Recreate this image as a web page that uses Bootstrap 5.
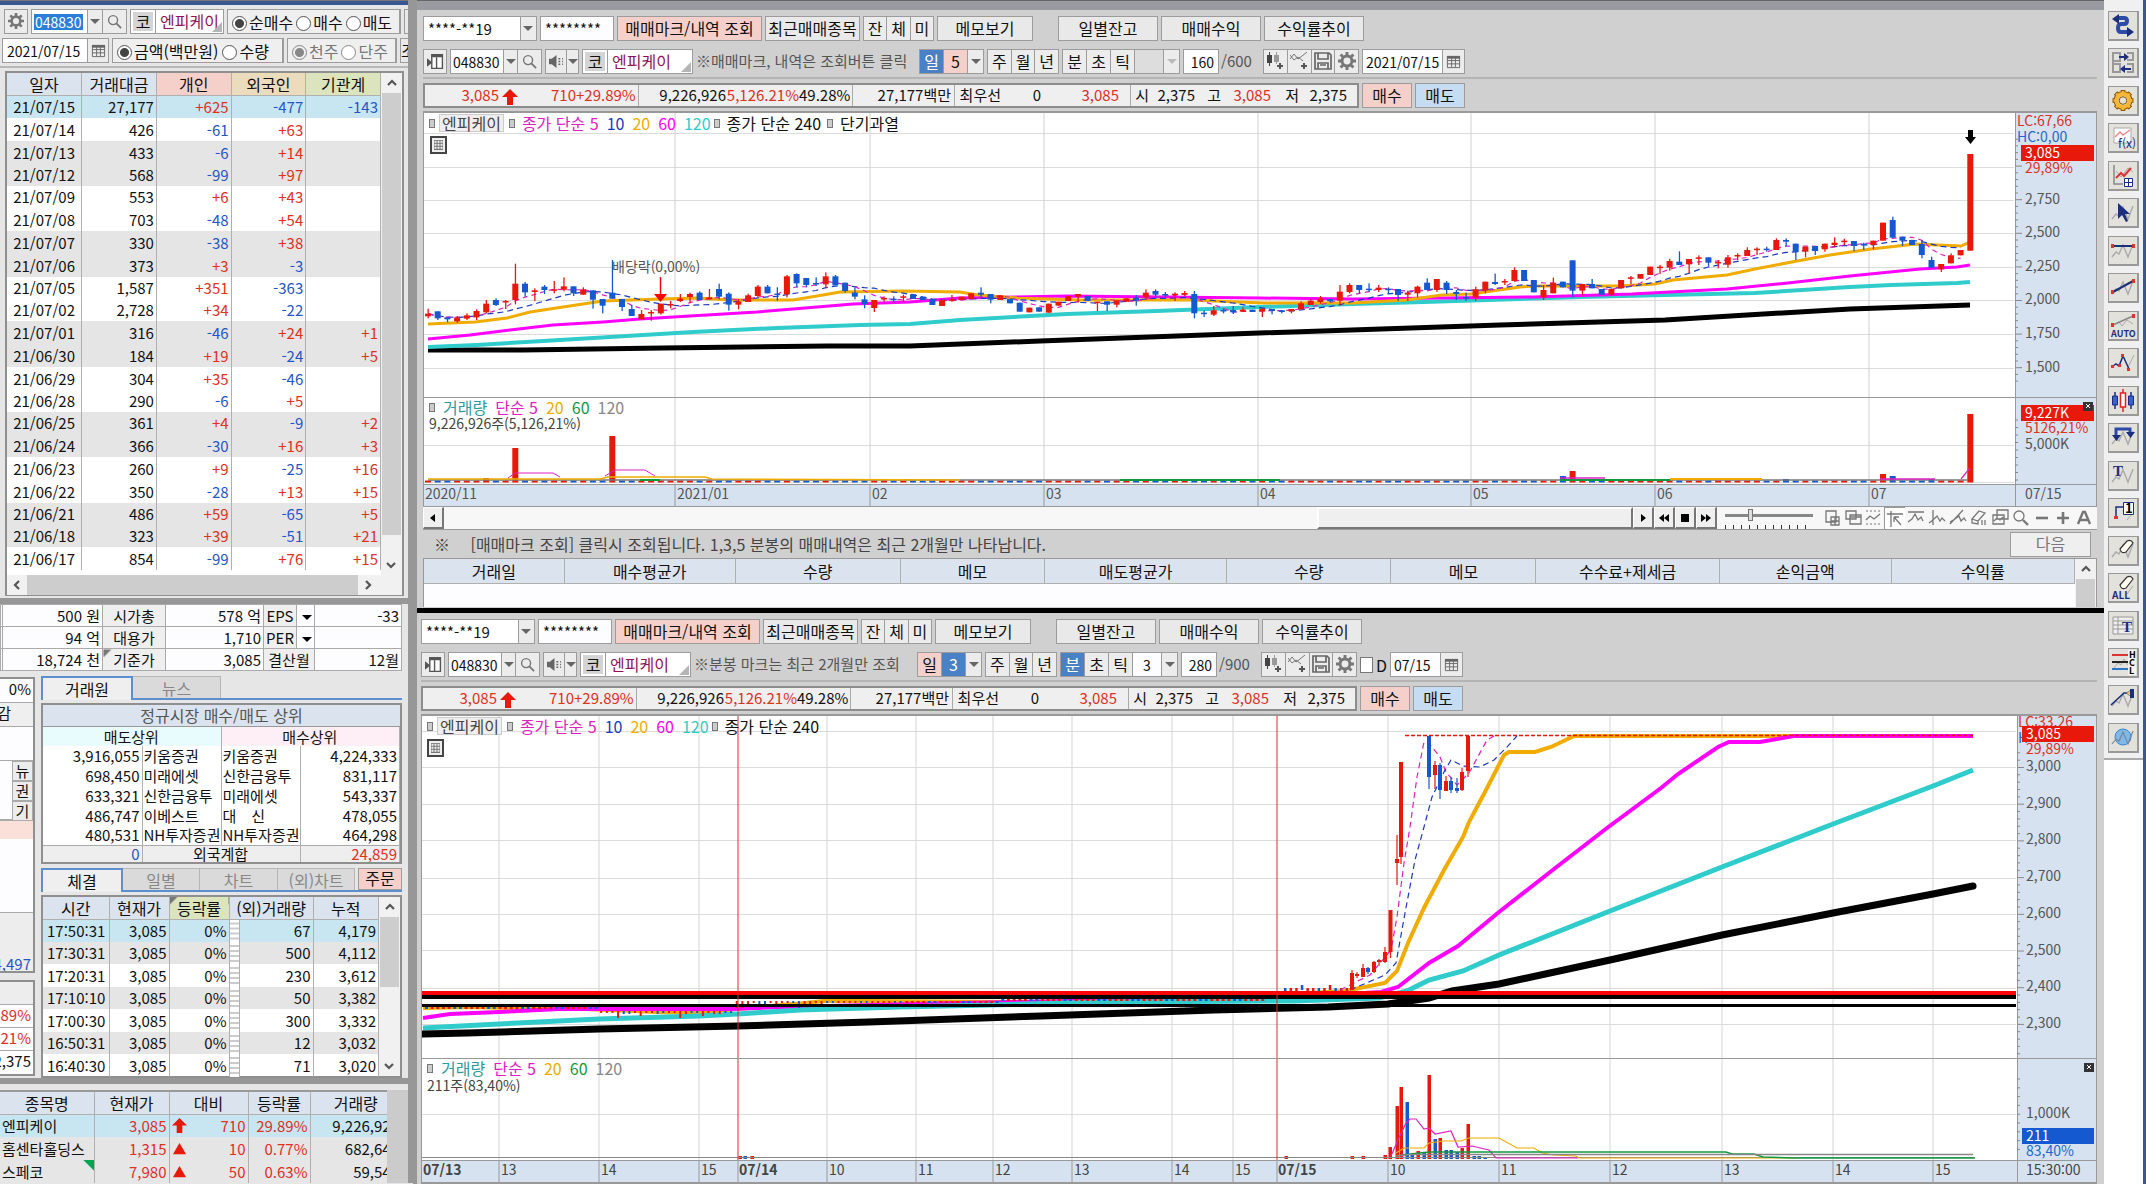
<!DOCTYPE html>
<html lang="ko">
<head>
<meta charset="utf-8">
<meta name="viewport" content="width=device-width, initial-scale=1">
<title>엔피케이 048830</title>
<link href="https://cdn.jsdelivr.net/npm/bootstrap@5.3.0/dist/css/bootstrap.min.css" rel="stylesheet">
<script src="https://cdn.jsdelivr.net/npm/bootstrap@5.3.0/dist/js/bootstrap.bundle.min.js"></script>
<style>
:root{--edge:#9c9c9c;--head:#dbe3ee;--up:#e8190a;--down:#1459cf;--sel:#c8e6f2;--alt:#e5e5e5}
body{font:16px/20px "Noto Sans CJK KR",sans-serif;color:#111;background:#fff;overflow:hidden}
button,input,select{font:inherit;color:inherit;padding:0;margin:0;border-radius:0;min-width:0}
label{white-space:nowrap}
.up{color:#e0301e!important}.dn{color:#2456c8!important}.gy{color:#777!important}.nm{color:#8e1258!important}
.side{flex:0 0 413px;width:413px;background:#e6e6e6;overflow:hidden}
.side .inner{width:408px}
.frame{border-right:5px solid #979797}
.topline{height:5px;background:#3b5793;border-top:1px solid #777}
.ctl{height:25px;border:1px solid var(--edge);background:#fff;display:flex;align-items:stretch;flex:none;white-space:nowrap;overflow:hidden;line-height:22px}
.ctl>*+*{border-left:1px solid var(--edge)!important}
.b{border:0;background:#ececec;display:inline-flex;align-items:center;justify-content:center;flex:1 1 0;line-height:20px;white-space:nowrap;padding-bottom:1px}
.b.on{background:#4a80c4;color:#fff}.b.pk{background:#f5d0ca}.b.bl{background:#c5dcf3}
.btnx{height:25px;border:1px solid var(--edge);background:#e9e9e9;flex:none;white-space:nowrap;line-height:20px;padding-bottom:2px}
.btnx.pk{background:#f5d0ca}.btnx.bl{background:#c5dcf3}
.fld{border:0;background:#fdfdff;outline:0;font-size:14px}
.w16{flex:0 0 16px}.w24{flex:0 0 24px}
.tri::after{content:"";display:inline-block;vertical-align:middle;border:5px solid transparent;border-top-color:#666;border-bottom:0}
.tri.dk::after{border-top-color:#000}.tri.lt::after{border-top-color:#bbb}
.pick{position:relative;flex:1}
.pick select{appearance:none;border:0;background:#fff;width:100%;height:100%;padding-left:4px;outline:0;font-size:15px}
.pick::after{content:"";position:absolute;right:3px;top:9px;border:5px solid transparent;border-top-color:#666;border-bottom:0;pointer-events:none}
.pick::before{content:"";position:absolute;right:0;top:0;bottom:0;width:16px;background:#ececec;border-left:1px solid var(--edge);pointer-events:none}
.stk{position:relative;background:#fff}
.stk b{font-weight:400;background:#d4d4d4;width:20px;text-align:center;margin:2px;line-height:18px}
.stk::after{content:"";position:absolute;right:1px;bottom:1px;border:5px solid transparent;border-right-color:#b5b5b5;border-bottom-color:#b5b5b5}
input[type=radio]{appearance:none;width:15px;height:15px;border:1px solid #555;border-radius:50%;background:#fff;vertical-align:-2px;margin-right:2px}
input[type=radio]:checked{background:radial-gradient(circle,#444 0 4px,#fff 5px)}
input[type=radio]:disabled{border-color:#888}
input[type=radio]:disabled:checked{background:radial-gradient(circle,#888 0 4px,#eee 5px)}
.rg{align-items:center;background:#efefef;padding-left:4px;border-right-width:2px}.rg label{border:0!important}
.g{border-collapse:collapse;table-layout:fixed;width:100%;margin:0}
.g td,.g th{font-weight:400;padding:0 2px;border-right:1px solid #b0b0b0;text-align:right;white-space:nowrap;overflow:hidden;line-height:16px}
.g td{font-size:15px}
.g th{background:var(--head);text-align:center;border-bottom:1px solid #b0b0b0;line-height:18px}
.g tr.s td{background:var(--sel)}.g tr.a td{background:var(--alt)}
.box{border:2px solid #8f8f8f;background:#fff}
.vs{flex:0 0 21px;background:#f1f1f1;position:relative}
.vs i{position:absolute;left:1px;right:1px;background:#cdcdcd}
.vs svg,.hs svg{display:block}
.hs{height:20px;background:#f1f1f1}
.fin td{background:#fdfdff;border:1px solid #aaa;height:22px}
.fin td.l{background:#efefef;text-align:center}
.tabs{border-bottom:2px solid #5b8fd0}
.tabs .t{border:1px solid #b5b5b5;border-bottom:0;border-left:0;background:#dadada;color:#888;height:22px;line-height:20px}
.tabs .t.on{border:2px solid #5b8fd0;border-bottom:0;background:#efefef;color:#111;margin-bottom:-2px;height:24px}
#brk td{line-height:16px;padding:0 2px 0 1px}
.main{flex:1 1 0;min-width:0;background:#d0d0d0;border-left:4px solid #979797}
.ttl{height:10px;background:#989ca1;border-top:1px solid #666}
.bar{display:flex;gap:3px;height:25px;margin-bottom:8px;white-space:nowrap}
.rule{height:2px;background:#b4b4b4;margin:-5px 0 4px}
.w1{padding:6px 7px 0 6px}.w2{padding:6px 7px 0 4px}
.quote{display:grid;grid-template-columns:74px 22px 55px 63px 87px 73px 54px 102px 46px 40px 78px 12px 18px 46px 26px 50px 28px 48px 1fr;width:936px;height:25px;border:2px solid #8c8c8c;background:#efefef;align-items:stretch;line-height:20px;font-size:15px;text-align:right;flex:none}
.quote .d{border-right:1px solid #aaa;padding-right:3px}
.note{width:220px;color:#555;line-height:23px;font-size:15px}
.chart{position:relative;border:1px solid #999;border-top:2px solid #999;background:#fff;margin-top:-5px}
.chart svg.cv{display:block;width:100%}
.lg{position:absolute;left:5px;display:flex;white-space:pre;line-height:16px;align-items:center;pointer-events:none}
.lg i{width:6px;height:9px;border:1px solid #777;background:#ccc}
.lgn{font-size:14px;color:#444}
.tools{flex:0 0 42px;width:42px;border-right:3px solid #3b5793;background:#fff}
.tools .in{background:#f0f0f0;border-bottom:2px solid #aaa;padding:11px 0 5px 4px;display:flex;flex-direction:column;gap:7px;height:760px;justify-content:space-between}
.tools button{width:31px;height:30px;border:1px solid #999;border-right-width:2px;border-bottom-width:2px;background:#e3e1dc;display:block}
.tools svg{display:block;width:28px;height:27px}
.sb{height:22px;background:#f7f7f7}
.sb .k{width:21px;flex:none;border:1px solid;border-color:#fff #777 #777 #fff;border-width:1px 2px 2px 1px;background:#efefef;display:flex;align-items:center;justify-content:center}
.sb .th{background:#efefef;border:2px solid;border-color:#fff #777 #777 #fff;flex:0 0 316px}
.sb .ic{flex:0 0 21px;display:flex;align-items:center;justify-content:center}
.sb .ic.on{background:#fff;border:1px solid #999;border-right:0;border-bottom:0}
.ticks{flex:0 0 101px;background:repeating-linear-gradient(90deg,#333 0 1px,transparent 1px 8px) 8px 100%/86px 4px no-repeat}
.range{appearance:none;width:88px;height:3px;background:#888;margin-bottom:6px}
.range::-webkit-slider-thumb{appearance:none;width:5px;height:12px;background:#ddd;border:1px solid #777}
.black{height:5px;background:#000;margin-top:1px}
.lk{width:35px;border:2px solid #8f8f8f;border-left:0;background:#fdfdff;overflow:hidden;font-size:15px}
.lk>div{border-bottom:1px solid #aaa;text-align:right;padding-right:2px;direction:rtl;white-space:nowrap}
.lk .m{width:21px;height:20px;background:#ececec;border:1px solid #aaa;text-align:center;padding:0;line-height:17px}
.st{background:repeating-linear-gradient(#fff 0 3px,#ccc 3px 5px)!important}
.cor{background-image:linear-gradient(135deg,#777 0 5px,transparent 6px)!important}
.cog{background-image:linear-gradient(225deg,#00a650 0 7px,transparent 8px)!important}
svg text{font-family:"Noto Sans CJK KR",sans-serif}
</style>
</head>
<body>
<svg width="0" height="0" class="position-absolute" aria-hidden="true">
<symbol id="gear" viewBox="0 0 16 16"><circle cx="8" cy="8" r="4.400" fill="none" stroke="currentColor" stroke-width="2.600"/><path d="M8 0v3M8 13v3M0 8h3M13 8h3M2.300 2.300l2.200 2.200M11.500 11.500l2.200 2.200M2.300 13.700l2.200-2.200M11.500 4.500l2.200-2.200" stroke="currentColor" stroke-width="2.600"/></symbol>
<symbol id="mag" viewBox="0 0 16 16"><circle cx="6.500" cy="6.500" r="4.800" fill="none" stroke="#777" stroke-width="1.500"/><path d="M10 10l5 5" stroke="#777" stroke-width="2"/></symbol>
<symbol id="cal" viewBox="0 0 16 16"><path d="M1.500 3.500h13v11h-13zM1.500 7h13M1.500 10.500h13M6 4v10M10 4v10" fill="none" stroke="#666"/><path d="M1 2h14v3H1z" fill="#666"/></symbol>
<symbol id="pan" viewBox="0 0 16 16"><path d="M4.500 1.500h10v13h-10zM9 4v10" fill="#fff" stroke="#555" stroke-width="1.300"/><path d="M4 1h11v3H4zM0 5l5 4-5 4z" fill="#555"/></symbol>
<symbol id="spk" viewBox="0 0 16 16"><path d="M0 5h3l5-4v14l-5-4H0z" fill="#666"/><path d="M10 5h2M10 8h2M10 11h2M14 5h1M14 8h1M14 11h1" stroke="#666" stroke-width="1.500"/></symbol>
<symbol id="cdl" viewBox="0 0 18 18"><path d="M1 3h5v8H1zM3 0h1v14H3z" fill="#444"/><path d="M8 3h5v7H8zM10 0h1v12h-1z" fill="#999"/><path d="M14 11v6M11 14h6" stroke="#555" stroke-width="2"/></symbol>
<symbol id="lin" viewBox="0 0 18 18"><path d="M0 7l4-5 4 5 4-3 5-4M0 3l4 5 4-3 5 4" fill="none" stroke="#777"/><path d="M14 11v6M11 14h6" stroke="#555" stroke-width="2"/></symbol>
<symbol id="sav" viewBox="0 0 18 18"><path d="M1 1h14l2 2v14H1zM4 1v6h10V1M4 17v-6h10v6M6 13h6" fill="none" stroke="#666" stroke-width="1.700"/></symbol>
<symbol id="cu" viewBox="0 0 12 12"><path d="M2 8l4-4 4 4" fill="none" stroke="#555" stroke-width="2.200"/></symbol>
<symbol id="cd" viewBox="0 0 12 12"><path d="M2 4l4 4 4-4" fill="none" stroke="#555" stroke-width="2.200"/></symbol>
<symbol id="cl" viewBox="0 0 12 12"><path d="M8 2L4 6l4 4" fill="none" stroke="#555" stroke-width="2.200"/></symbol>
<symbol id="cr" viewBox="0 0 12 12"><path d="M4 2l4 4-4 4" fill="none" stroke="#555" stroke-width="2.200"/></symbol>
<symbol id="ar" viewBox="0 0 16 16"><path d="M8 0l8 8h-5v8H5V8H0z" fill="#e8190a"/></symbol>
<symbol id="tr" viewBox="0 0 16 16"><path d="M8 2l7 12H1z" fill="#e8190a"/></symbol>
</svg>

<div class="d-flex" style="min-height:100vh">
<aside class="side">
 <section class="frame" style="border-bottom:6px solid #979797">
  <div class="topline"></div>
  <div class="d-flex px-0 pt-1 mb-1 ps-1 inner overflow-hidden" style="gap:3px">
   <div class="ctl" style="width:24px"><button class="b" aria-label="설정"><svg width="16" height="16" color="#777"><use href="#gear"/></svg></button></div>
   <div class="ctl" style="width:96px"><input class="fld" style="width:55px;background:linear-gradient(#2a7fd8,#2a7fd8) 2px 4px/49px 16px no-repeat;color:#fff;padding-left:3px" value="048830" aria-label="종목코드"><button class="b tri" aria-label="목록"></button><button class="b w24" aria-label="검색"><svg width="15" height="15"><use href="#mag"/></svg></button></div>
   <div class="ctl stk" style="width:94px"><b>코</b><span class="nm border-0 ps-1">엔피케이</span></div>
   <div class="ctl rg" style="width:174px;gap:3px"><label><input type="radio" name="r1" checked>순매수</label><label><input type="radio" name="r1">매수</label><label><input type="radio" name="r1">매도</label></div>
   <div class="btnx" style="width:20px"></div>
  </div>
  <div class="d-flex inner overflow-hidden" style="gap:3px;padding-left:2px">
   <div class="ctl" style="width:107px"><input class="fld ps-1" style="width:84px" value="2021/07/15" aria-label="일자"><button class="b" aria-label="달력"><svg width="15" height="15"><use href="#cal"/></svg></button></div>
   <div class="ctl rg" style="width:172px;gap:4px"><label><input type="radio" name="r2" checked>금액(백만원)</label><label><input type="radio" name="r2">수량</label></div>
   <div class="ctl rg gy" style="width:110px;gap:3px"><label><input type="radio" name="r3" checked disabled>천주</label><label><input type="radio" name="r3" disabled>단주</label></div>
   <button class="btnx text-start" style="width:40px">조회</button>
  </div>
  <div style="height:2px;background:#b8b8b8;margin:3px 0"></div>
  <div class="box" style="margin:0 4px 2px 5px;height:525px">
   <div class="d-flex" style="height:502px">
    <div style="width:375px"><table class="g" id="inv"><colgroup><col><col><col><col><col></colgroup><thead><tr style="height:22px"><th>일자</th><th>거래대금</th><th style="background:#f5d0ca">개인</th><th style="background:#ecdcbe">외국인</th><th style="background:#dbe4bd">기관계</th></tr></thead><tbody></tbody></table></div>
    <div class="vs"><svg width="12" height="12" class="mx-auto mt-1"><use href="#cu"/></svg><i style="top:20px;bottom:40px"></i><svg width="12" height="12" class="position-absolute bottom-0 start-0 ms-1 mb-1"><use href="#cd"/></svg></div>
   </div>
   <div class="hs d-flex align-items-center justify-content-between px-1"><svg width="12" height="12"><use href="#cl"/></svg><span class="flex-fill align-self-stretch mx-1" style="background:#cdcdcd"></span><svg width="12" height="12" class="me-4"><use href="#cr"/></svg></div>
  </div>
 </section>

 <section class="frame" style="border-bottom:6px solid #979797;height:480px">
  <table class="g fin" style="width:402px;height:66px"><colgroup><col style="width:2px"><col style="width:100px"><col style="width:63px"><col style="width:98px"><col style="width:33px"><col style="width:18px"><col></colgroup>
   <tr><td></td><td>500 원</td><td class="l">시가총</td><td>578 억</td><td class="l">EPS</td><td class="tri dk"></td><td>-33</td></tr>
   <tr><td></td><td>94 억</td><td class="l">대용가</td><td>1,710</td><td class="l">PER</td><td class="tri dk"></td><td></td></tr>
   <tr><td></td><td>18,724 천</td><td class="l cor">기준가</td><td>3,085</td><td class="l" colspan="2">결산월</td><td>12월</td></tr></table>
  <div class="d-flex" style="gap:6px;margin-top:6px">
   <div>
    <div class="lk" style="height:296px">
     <div style="height:24px">0%</div><div style="height:24px;background:#efefef;padding-right:22px">감</div><div style="height:34px"></div>
     <div style="height:60px;border-bottom:2px solid #aaa;padding:0"><div class="m">뉴</div><div class="m">권</div><div class="m">기</div></div>
     <div style="height:18px;background:#fbe0da;border:0"></div><div style="height:74px"></div><div class="dn" style="height:62px;background:#ededed;padding-top:41px">4,497</div>
    </div>
    <div class="lk" style="height:96px;margin-top:7px"><div style="height:23px;background:#ededed"></div><div class="up" style="height:23px">9.89%</div><div class="up" style="height:23px">6.21%</div><div style="height:24px">2,375</div></div>
   </div>
   <div style="width:361px">
    <div class="tabs d-flex align-items-end" style="height:23px"><button class="t on" style="width:92px">거래원</button><button class="t" style="width:88px">뉴스</button></div>
    <div class="box border-1" style="margin-top:3px">
     <div class="text-center" style="background:var(--head);height:22px;color:#555;border-bottom:1px solid #999">정규시장 매수/매도 상위</div>
     <table class="g" id="brk"><colgroup><col style="width:99px"><col style="width:79px"><col style="width:79px"><col></colgroup><tr style="height:19px"><td colspan="2" class="text-center" style="background:#e8fbfd">매도상위</td><td colspan="2" class="text-center" style="background:#fdeff5">매수상위</td></tr></table>
    </div>
    <div class="tabs d-flex align-items-end" style="height:25px;margin-top:3px"><button class="t on" style="width:82px">체결</button><button class="t" style="width:77px">일별</button><button class="t" style="width:78px">차트</button><button class="t" style="width:77px">(외)차트</button><button class="btnx pk ms-auto" style="height:22px;width:44px;line-height:18px">주문</button></div>
    <div class="box d-flex" style="margin-top:3px;height:183px">
     <div style="width:336px"><table class="g" id="tic"><colgroup><col style="width:66px"><col style="width:60px"><col style="width:60px"><col style="width:10px"><col style="width:74px"><col></colgroup><thead><tr style="height:22px"><th>시간</th><th>현재가</th><th class="cor" style="background-color:#dbe4bd">등락률</th><th colspan="2">(외)거래량</th><th>누적</th></tr></thead><tbody></tbody></table></div>
     <div class="vs"><svg width="12" height="12" class="mx-auto mt-1"><use href="#cu"/></svg><i style="top:20px;height:70px"></i><svg width="12" height="12" class="position-absolute bottom-0 start-0 ms-1 mb-1"><use href="#cd"/></svg></div>
    </div>
   </div>
  </div>
 </section>

 <section class="frame" style="padding-top:6px">
  <div class="d-flex"><div class="overflow-hidden" style="width:387px;border-top:2px solid #999"><table class="g" id="wat" style="width:402px"><colgroup><col style="width:94px"><col style="width:75px"><col style="width:79px"><col style="width:62px"><col></colgroup><thead><tr style="height:22px"><th>종목명</th><th>현재가</th><th>대비</th><th>등락률</th><th>거래량</th></tr></thead><tbody></tbody></table></div><div class="flex-fill" style="background:#cbcbcb"></div></div>
 </section>
</aside>

<main class="main">
 <div class="ttl"></div>
 <section class="w1" id="top"></section>
 <div class="black"></div>
 <section class="w2" id="bot"></section>
</main>

<nav class="tools" aria-label="차트 도구"><div class="in" id="tools"></div></nav>
</div>

<script>
const $=s=>document.querySelector(s);
const sign=v=>v?(v[0]=='+'?'up':'dn'):'';
/* ---------- tables ---------- */
$('#inv tbody').innerHTML=`21/07/15 27,177 +625 -477 -143|21/07/14 426 -61 +63|21/07/13 433 -6 +14|21/07/12 568 -99 +97|21/07/09 553 +6 +43|21/07/08 703 -48 +54|21/07/07 330 -38 +38|21/07/06 373 +3 -3|21/07/05 1,587 +351 -363|21/07/02 2,728 +34 -22|21/07/01 316 -46 +24 +1|21/06/30 184 +19 -24 +5|21/06/29 304 +35 -46|21/06/28 290 -6 +5|21/06/25 361 +4 -9 +2|21/06/24 366 -30 +16 +3|21/06/23 260 +9 -25 +16|21/06/22 350 -28 +13 +15|21/06/21 486 +59 -65 +5|21/06/18 323 +39 -51 +21|21/06/17 854 -99 +76 +15`.split('|').map((r,i)=>{const c=r.split(' ');return `<tr style="height:${i%5<3?23:22}px" class="${i==0?'s':(i>>1)%2?'a':''}"><td class="text-center">${c[0]}</td><td>${c[1]}</td>`+[2,3,4].map(k=>`<td class="${sign(c[k])}">${c[k]||''}</td>`).join('')+'</tr>'}).join('');
$('#brk').insertAdjacentHTML('beforeend',[['3,916,055','키움증권','키움증권','4,224,333'],['698,450','미래에셋','신한금융투','831,117'],['633,321','신한금융투','미래에셋','543,337'],['486,747','이베스트','대&emsp;신','478,055'],['480,531','NH투자증권','NH투자증권','464,298']].map((r,i)=>`<tr style="height:${i==3?19:20}px"><td>${r[0]}</td><td class="text-start">${r[1]}</td><td class="text-start">${r[2]}</td><td>${r[3]}</td></tr>`).join('')+'<tr style="height:17px;border-top:1px solid #aaa"><td class="dn" style="background:#eee">0</td><td colspan="2" class="text-center" style="background:#eee">외국계합</td><td class="up" style="background:#eee">24,859</td></tr>');
$('#tic tbody').innerHTML=[['17:50:31','67','4,179'],['17:30:31','500','4,112'],['17:20:31','230','3,612'],['17:10:10','50','3,382'],['17:00:30','300','3,332'],['16:50:31','12','3,032'],['16:40:30','71','3,020']].map((r,i)=>`<tr style="height:${i%2?22:23}px" class="${i==0?'s':i%2?'a':''}"><td class="text-start ps-1">${r[0]}</td><td>3,085</td><td>0%</td><td class="st"></td><td>${r[1]}</td><td>${r[2]}</td></tr>`).join('');
$('#wat tbody').innerHTML=[['엔피케이','3,085','ar','710','29.89%','9,226,926'],['홈센타홀딩스','1,315','tr','10','0.77%','682,640'],['스페코','7,980','tr','50','0.63%','59,540']].map((r,i)=>`<tr style="height:23px" class="${i==0?'s':i==1?'a':''}"><td class="text-start ${i==2?'cog':''}">${r[0]}</td><td class="up">${r[1]}</td><td class="up"><span class="d-flex justify-content-between align-items-center"><svg width="15" height="15"><use href="#${r[2]}"/></svg>${r[3]}</span></td><td class="up">${r[4]}</td><td>${r[5]}</td></tr>`).join('');

/* ---------- order toolbars ---------- */
const ic=(n,s=18,l=n)=>`<button class="b" aria-label="${l}"><svg width="${s}" height="${s}" color="#777"><use href="#${n}"/></svg></button>`;
function head(o){return `
<div class="bar">
 <div class="ctl" style="width:114px"><div class="pick"><select aria-label="계좌"><option>****-**19</option></select></div></div>
 <div class="ctl" style="width:74px"><input class="fld w-100 ps-1" value="********" aria-label="비밀번호" style="font-size:15px"></div>
 <button class="btnx pk" style="width:145px">매매마크/내역 조회</button>
 <button class="btnx" style="width:95px">최근매매종목</button>
 <div class="ctl" style="width:71px"><button class="b">잔</button><button class="b">체</button><button class="b">미</button></div>
 <button class="btnx" style="width:96px">메모보기</button>
 <button class="btnx" style="width:100px;margin-left:22px">일별잔고</button><button class="btnx" style="width:100px">매매수익</button><button class="btnx" style="width:100px">수익률추이</button>
</div>
<div class="bar">
 <div class="ctl" style="width:24px">${ic('pan',17)}</div>
 <div class="ctl" style="width:92px"><input class="fld" style="width:52px;padding-left:2px" value="048830" aria-label="종목코드"><button class="b tri" aria-label="목록"></button><button class="b w24" aria-label="검색"><svg width="15" height="15"><use href="#mag"/></svg></button></div>
 <div class="ctl" style="width:34px"><button class="b" aria-label="음성" style="flex:0 0 20px"><svg width="15" height="15"><use href="#spk"/></svg></button><button class="b tri" aria-label="음성 목록"></button></div>
 <div class="ctl stk" style="width:111px"><b>코</b><span class="nm border-0 ps-1">엔피케이</span></div>
 <div class="note">${o.note}</div>
 <div class="ctl" style="width:65px"><button class="b ${o.m?'pk':'on'}">일</button><button class="b ${o.m?'on':'pk'}">${o.m?3:5}</button><button class="b tri w16" aria-label="주기"></button></div>
 <div class="ctl" style="width:72px"><button class="b">주</button><button class="b">월</button><button class="b">년</button></div>
 <div class="ctl" style="width:118px"><button class="b ${o.m?'on':''}" style="flex:0 0 23px">분</button><button class="b" style="flex:0 0 24px">초</button><button class="b" style="flex:0 0 24px">틱</button><input class="fld text-center" style="width:29px${o.m?'':';background:#ddd'}" value="${o.m?3:''}" aria-label="단위"><button class="b tri ${o.m?'':'lt'}" aria-label="단위 목록"></button></div>
 <div class="ctl" style="width:36px"><input class="fld w-100 text-end pe-1" value="${o.n}" aria-label="봉 개수"></div>
 <div style="width:38px;color:#555;line-height:23px;font-size:15px;margin-left:-1px;margin-right:1px">/${o.t}</div>
 <div class="ctl" style="width:96px">${ic('cdl')}${ic('lin')}${ic('sav')}${ic('gear')}</div>
 ${o.m?'<label class="d-flex align-items-center" style="width:27px;gap:3px"><input type="checkbox" style="appearance:none;width:16px;height:16px;background:#fff;border:1px solid #777">D</label>':''}
 <div class="ctl" style="width:${o.m?73:103}px"><input class="fld" style="padding-left:3px;width:${o.m?49:79}px" value="${o.d}" aria-label="기준일"><button class="b" aria-label="달력"><svg width="15" height="15"><use href="#cal"/></svg></button></div>
</div>
<div class="rule"></div>
<div class="bar"><div class="quote"><span class="up">3,085</span><span class="text-center"><svg width="16" height="16"><use href="#ar"/></svg></span><span class="up">710</span><span class="up d">+29.89%</span><span>9,226,926</span><span class="up">5,126.21%</span><span class="d">49.28%</span><span class="d">27,177백만</span><span>최우선</span><span>0</span><span class="up">3,085</span><span class="d"></span><span>시</span><span>2,375</span><span>고</span><span class="up">3,085</span><span>저</span><span>2,375</span></div><button class="btnx pk" style="width:50px">매수</button><button class="btnx bl" style="width:50px">매도</button></div>`}
const leg=tail=>`<i></i><span style="border:1px solid #ccc;background:#eee;padding:0 2px;margin:0 5px 0 4px;color:#444">엔피케이</span><i></i><span style="color:#e020c0;margin-left:7px">종가 단순 5</span>`+[['10','#1c39c0'],['20','#f0ac00'],['60','#f0f'],['120','#30cccc']].map(c=>`<span style="color:${c[1]};margin-left:8px">${c[0]}</span>`).join('')+`<i style="margin:0 7px 0 3px"></i>종가 단순 240`+tail;
const vleg=()=>`<i></i><span style="color:#2f9aa0;margin-left:8px">거래량</span><span style="color:#e020c0;margin-left:8px">단순 5</span><span style="color:#f0ac00;margin-left:8px">20</span><span style="color:#109a40;margin-left:8px">60</span><span style="color:#888;margin-left:8px">120</span>`;
const G='fill="none" stroke="#777" stroke-width="1.3"';
const small=[`<path d="M3 2h10v11H3z" ${G}/><path d="M8 8h8v8H8zM12 8v8M8 12h8" ${G}/>`,`<path d="M2 2h10v8H2z" ${G}/><path d="M6 6h11v9H6zM6 8h11" ${G}/>`,`<path d="M1 2h15M1 15h15" stroke="#777" stroke-dasharray="2 2"/><path d="M1 11l4-4 4 3 6-5" ${G}/>`,`<path d="M1 4h16M5 1v16M8 7l7 8M8 7v5M8 7h5" ${G}/>`,`<path d="M1 3h16M1 13l4-3 3-5 3 6 3-3 2 4" ${G}/>`,`<path d="M5 1v15M1 14l4-3 4-4 3 5 2-3 3 3" ${G}/>`,`<path d="M1 15L14 1M1 13l5-3 4-3 2 5 3-3 2 3" ${G}/>`,`<path d="M2 10l7-8 6 2-7 8zM2 10v4l6 1v-3M12 11v5M15 11v5" ${G}/>`,`<path d="M6 1h11v9H6zM2 6h11v9H2zM3 12l3-3 3 2 3-3" ${G}/>`,`<circle cx="7" cy="7" r="5" ${G}/><path d="M11 11l5 5" stroke="#777" stroke-width="2.400"/>`,`<path d="M3 9h12" stroke="#777" stroke-width="2.600"/>`,`<path d="M3 9h12M9 3v12" stroke="#777" stroke-width="2.600"/>`,`<path d="M3 15L8 3h2l5 12M5 11h8" fill="none" stroke="#777" stroke-width="2.400"/>`];
const K=d=>`<button class="k" aria-label="이동"><svg width="14" height="12" viewBox="0 0 14 12"><path d="${d}"/></svg></button>`;
$('#top').innerHTML=head({note:'※매매마크, 내역은 조회버튼 클릭',n:160,t:600,d:'2021/07/15'})+`
<div class="chart"><div class="lg" style="top:1px">${leg('<i style="margin:0 7px 0 6px"></i>단기과열')}</div><div class="lg" style="top:286px">${vleg()}</div><div class="lg lgn" style="top:302px">9,226,926주(5,126,21%)</div><svg class="cv" id="c1" height="393"></svg></div>
<div class="sb d-flex">${K('M9 2v8L4 6z')}<span class="flex-fill"></span><span class="th"></span>${K('M5 2v8l5-4z')}${K('M7 2v8L2 6zM12 2v8L7 6z')}${K('M3 2h8v8H3z')}${K('M2 2v8l5-4zM7 2v8l5-4z')}<span class="px-2 d-flex align-items-center ticks"><input type="range" class="range" value="28" aria-label="배율"></span>${small.map((s,i)=>`<span class="ic ${i==3?'on':''}"><svg width="18" height="18">${s}</svg></span>`).join('')}<span style="width:3px"></span></div>
<div class="d-flex justify-content-between align-items-center" style="height:29px;border-top:1px solid #999;color:#444;padding:0 6px 0 11px"><span>※&emsp; [매매마크 조회] 클릭시 조회됩니다. 1,3,5 분봉의 매매내역은 최근 2개월만 나타납니다.</span><button class="btnx gy" style="width:81px;background:#efefef">다음</button></div>
<div class="d-flex" style="height:49px;background:#fdfdff;border:1px solid #999;border-bottom:0"><div class="flex-fill"><table class="g"><colgroup>${[140,171,165,144,182,164,145,183,172,183].map(w=>`<col style="width:${w/16.49}%">`).join('')}</colgroup><tr style="height:24px">${'거래일 매수평균가 수량 메모 매도평균가 수량 메모 수수료+제세금 손익금액 수익률'.split(' ').map(t=>`<th>${t}</th>`).join('')}</tr></table></div><div class="vs"><svg width="12" height="12" class="mx-auto mt-1"><use href="#cu"/></svg><i style="top:20px;bottom:0"></i></div></div>`;
$('#bot').innerHTML=head({m:1,note:'※분봉 마크는 최근 2개월만 조회',n:280,t:900,d:'07/15'})+`
<div class="chart"><div class="lg" style="top:1px">${leg('')}</div><div class="lg" style="top:344px">${vleg()}</div><div class="lg lgn" style="top:361px">211주(83,40%)</div><svg class="cv" id="c2" height="470"></svg></div>`;

/* ---------- charts ---------- */
const UP='#e8190a',DN='#1459cf';
/* daily candles: direction, body top, body bottom, wick top, wick bottom */
const D=[];
const add=(s,k,off)=>s.trim().split(/\s+/).forEach(t=>{const[c,a]=[t[0],t.slice(1).split(',').map(Number)];const y=a.map(v=>off+v/k);D.push([c,y[0],y[1],y[2]??y[0],y[3]??y[1]])});
add(`R251,259,236,265 B244,265,244,270 B262,268,262,277 R263,274,258,278 R256,266,250,270 R243,262,238,270 R221,247,210,250 B210,225,205,228 R213,216,210,237 R161,210,101,223 B161,187,156,200 R181,186,175,213 B170,180,165,192 R178,182,153,190 R169,179,142,184 B169,190,169,198 R178,194,172,194 B181,209,181,236 B207,227,207,250 B188,206,90,206 B207,231,207,243 B237,258,225,258 R252,268,240,268 R246,249,240,272 R221,250,221,254 R222,226,213,235 R206,213,192,216 R192,201,188,220 B188,210,184,210 R202,208,177,208 B177,200,161,208 B191,224,187,242 R214,224,207,238 R196,216,191,216 R170,198,165,203 B170,190,165,190 B191,195,172,212 R139,193,135,202 B132,160,130,172 B144,165,144,172 B159,163,142,168 R139,163,127,175 B139,166,135,166 B158,183,158,188 B188,200,172,208 B208,222,196,235 R210,234,210,246 R204,208,199,215 B206,210,199,218 R199,203,194,215`,3,230);
add(`B883,897 B890,900 B897,915 R900,918 R898,902,885,905 R890,900 R880,897 B878,884,862,890 B882,899,882,910 R886,900 B897,910 B908,935 R923,937 B922,935 R911,938 R905,917 R888,903 R882,890,882,908 B888,903 R905,909,905,933 B904,914,904,933 R901,914,901,922 R895,905 B893,900,885,917 R878,892,868,900 B873,884,868,897 B882,886,876,890 R881,884,877,903 R879,884,873,888 B882,940,873,955 B938,941,932,951 R931,944,918,948 B930,934,925,940 B930,937,918,942 R929,935,922,935 B929,936 R926,935,926,951 B927,933,927,943 B931,934,931,940 R927,934,927,940 R910,928,904,928 R902,915,897,915 R896,906,888,911 B897,904,897,908 R875,902,855,917 R855,876,850,880 B855,870,855,880 B866,870,850,876 R863,870,855,876 B866,870,862,882 B867,885,867,903 R878,884,872,903 R860,880,857,893 B848,870,835,870 R837,870,837,876 B848,870,843,882 B876,882,870,900 B891,895,878,903 R868,893,860,903 R845,872,845,880 B846,852,821,855 R843,847,837,855 R810,843,802,845 B810,843 B840,877 R870,892,855,900 R848,880,833,880 B845,862 B781,872,781,892 R852,872,852,886 B852,865,837,865 B867,884 R867,884,867,888 R840,865 R832,836,828,853 R822,836 R800,825 R800,804,795,822 R783,803,776,812 B785,795,754,795 R777,793,777,820 R772,776,766,795 B772,788,772,800 R786,790,780,805 R772,794,765,803 R765,769,760,780 R750,768,742,768 R746,750,742,765 B746,749,740,755 R720,750,715,750 B720,725,715,740 B731,756,731,780 R740,755,740,772 B738,753,738,765 R731,748,731,755 R728,735,712,740 R722,726,716,735 B723,738,723,753 B731,734,728,750 R722,735,722,748 R668,722 B660,713,650,713 B710,722,710,738 B720,735 B732,765,720,775 B780,803,770,803 R792,808,792,816 R766,790,760,790 R750,766 R462,752`,3,0);

function pen(id,x0,y0,refW){
 const el=$(id),W=el.clientWidth,H=el.clientHeight,plot=refW-82,k=(W-82)/plot;
 const X=x=>x-x0>plot?W-refW+(x-x0):(x-x0)*k,Y=y=>y-y0;let o='';
 return{W,H,X,Y,
  line(p,c,w,ex=''){o+=`<polyline points="${p.map(q=>X(q[0]).toFixed(1)+','+Y(q[1]).toFixed(1)).join(' ')}" fill="none" stroke="${c}" stroke-width="${w}" ${ex}/>`},
  rect(x,y,w,h,c){o+=`<rect x="${X(x)}" y="${Y(y)}" width="${w}" height="${h}" fill="${c}"/>`},
  text(x,y,t,c='#555',ex=''){o+=`<text x="${X(x)}" y="${Y(y)+5}" fill="${c}" font-size="14" ${ex}>${t}</text>`},
  raw(s){o+=s},done(){el.innerHTML=o}}
}
const poly=s=>s.split(' ').map(t=>t.split(',').map(Number));
const xs=(p,bx,by,c='#333')=>{p.rect(bx,by,10,9,c);p.line([[bx+3,by+2],[bx+7,by+6]],'#fff',1);p.line([[bx+7,by+2],[bx+3,by+6]],'#fff',1)};
function icon(p,x,y){p.rect(x,y,17,18,'#444');p.rect(x+2,y+2,13,14,'#eee');p.rect(x+4,y+4,9,10,'#777');[5,8,11].forEach(a=>[5,8,11].forEach(b=>p.rect(x+a-.5,y+b-.2,2,2,'#eee')))}
function daily(){
 const p=pen('#c1',424,113,1672);const C=i=>428+9.7*i;
 [133,167,200,233,267,300,334,368,445,482].forEach(y=>p.line([[424,y+.5],[2014,y+.5]],'#dcdcdc',1));
 [675,870,1044,1258,1471,1655,1869].forEach(x=>p.line([[x,113],[x,484]],'#d0d0d0',1));
 p.rect(2015,113,90,372,'#d6e2ef');p.rect(424,484,1700,24,'#d6e2ef');
 p.line(poly('428,350 523,350 663,348 827,346 910,346 1040,341 1259,333 1500,325 1599,322 1665,320 1747,315 1850,309 1970,305'),'#000',5);
 p.line(poly('428,347 477,345 543,341 610,337 693,332 777,328 860,325 910,324 960,320 1067,314 1156,311 1260,307 1353,304 1424,302 1520,299 1582,297 1665,295 1755,293 1850,287 1891,285 1957,283 1970,282'),'#30cccc',4);
 p.line(poly('428,339 470,335 510,330 553,325 603,322 640,319 690,316 757,312 793,309 853,304 910,302 960,298 1067,296 1260,298 1353,299 1442,298 1533,297 1632,294 1727,289 1788,283 1850,276 1920,269 1957,267 1970,265'),'#f0f',3);
 p.line(poly('428,324 475,322 507,318 530,312 563,307 603,301 660,299 697,298 730,300 793,300 823,295 840,292 903,291 960,292 978,295 1017,298 1078,300 1189,300 1264,303 1353,303 1406,300 1442,295 1471,294 1520,287 1533,286 1619,286 1655,284 1673,280 1727,275 1755,269 1797,261 1830,255 1871,249 1916,244 1937,245 1961,246 1970,242'),'#f0ac00',3);
 const cl=D.map(d=>d[0]=='R'?d[1]:d[2]);
 const sma=n=>cl.map((_,i)=>{const a=cl.slice(Math.max(0,i-n+1),i+1);return[C(i),a.reduce((s,v)=>s+v)/a.length]}).slice(0,159);
 p.line(sma(10),'#1c39c0',1.2,'stroke-dasharray="6 4"');p.line(sma(5),'#e020c0',1.2,'stroke-dasharray="5 4"');
 D.forEach((d,i)=>{const c=d[0]=='R'?UP:DN,x=C(i);p.rect(x-.5,d[3],1.3,d[4]-d[3],c);p.rect(x-3,d[1],6,Math.max(1.5,d[2]-d[1]),c)});
 D.forEach((d,i)=>{const big={9:448,19:436,117:476,118:471,150:474,151:476,6:478,159:414,140:479,155:479}[i]||480.5;p.rect(C(i)-3,big,6,482.5-big,d[0]=='R'||i==19||i==118?UP:DN)});
 p.line([[428,480],[1968,480]],'#777',1.5);
 p.line([[428,479],[600,479],[608,477],[705,477],[712,479],[960,480]],'#f0ac00',1.5);
 [[1120,1280],[1560,1670],[640,660]].forEach(a=>p.line([[a[0],480],[a[1],480]],'#109a40',2));
 p.line([[1670,479],[1762,479]],'#f0ac00',2);p.line([[1560,478],[1605,478]],'#e020c0',1.5);p.line([[1880,479],[1935,479]],'#e020c0',1.5);
 p.line(poly('508,478 515,473 553,473 560,477'),'#e020c0',1);p.line(poly('605,476 615,470 645,470 655,476'),'#e020c0',1);p.line(poly('1961,479 1970,468'),'#e020c0',1.2);
 p.line([[424,397.5],[2105,397.5]],'#999',1);p.line([[424,484.5],[2105,484.5]],'#999',1);p.line([[2015.5,113],[2015.5,508]],'#999',1);
 for(let v=1400;v<=3200;v+=50){const y=300.5+(2000-v)*.1344;p.line([[2015,y],[v%250?2018:2022,y]],'#888',1)}
 for(let y=420;y<483;y+=7.5)p.line([[2015,y],[2018,y]],'#888',1);
 [['2,750',200],['2,500',233],['2,250',267],['2,000',300],['1,750',334],['1,500',368],['5,000K',445]].forEach(a=>p.text(2025,a[1]-1,a[0]));
 p.text(2017,121,'LC:67,66','#e0301e');p.text(2017,137,'HC:0,00','#2466d0');
 p.rect(2021,145,73,16,UP);p.text(2025,153,'3,085','#fff');p.text(2025,168,'29,89%','#e0301e');
 p.rect(2021,405,73,16,UP);p.text(2025,413,'9,227K','#fff');p.text(2025,428,'5126,21%','#e0301e');xs(p,2083,402);
 [['2020/11',425],['2021/01',677],['02',872],['03',1046],['04',1260],['05',1473],['06',1657],['07',1871],['07/15',2025]].forEach(a=>p.text(a[1],494,a[0]));
 [675,870,1044,1258,1471,1655,1869].forEach(x=>p.line([[x,485],[x,507]],'#999',1));
 p.text(612,267,'배당락(0,00%)','#555');
 p.line([[660.5,277],[660.5,294]],'#f00',1.4);p.raw(`<path d="M${p.X(654)} ${p.Y(294)}h13l-6.500 8z" fill="#f00"/>`);
 p.raw(`<path d="M${p.X(1968)} ${p.Y(130)}h5v7h3l-5.500 7-5.500-7h3z"/>`);icon(p,430,136);p.done();
}
function minute(){
 const p=pen('#c2',422,716,1674);
 [731,767,804,840,878,914,950,988,1024,1114].forEach(y=>p.line([[422,y+.5],[2016,y+.5]],'#dcdcdc',1));
 [499,599,699,827,916,993,1072,1172,1233,1388,1499,1610,1722,1833,1933].forEach(x=>p.line([[x,716],[x,1160]],'#d4d4d4',1));
 p.rect(2017,716,90,445,'#d6e2ef');p.rect(422,1160,1700,26,'#d6e2ef');
 p.line(poly('423,1008 470,1007 510,1008 560,1008 657,1012 697,1013 737,1009 806,1003 823,1001 875,1001 1013,1002 1214,999 1345,991 1385,983 1397,971 1408,943 1424,908 1444,870 1463,837 1469,822 1486,790 1504,755 1509,752 1535,752 1551,747 1574,736 1800,736'),'#f0ac00',4);
 p.line(poly('423,1018 450,1014 499,1012 559,1009 731,1009 783,1007 961,1003 1070,1001 1260,999 1381,992 1398,987 1429,963 1458,946 1499,912 1554,869 1607,828 1661,788 1678,774 1718,747 1729,742 1760,742 1794,736 1973,736'),'#f0f',4);
 p.line(poly('423,1028 499,1024 599,1019 699,1016 738,1014 800,1010 898,1007 990,1005 1099,1002 1294,1001 1379,998 1407,991 1429,980 1463,971 1499,955 1610,911 1722,867 1833,824 1933,786 1973,770'),'#30cccc',5);
 p.line(poly('423,1034 467,1033 599,1029 738,1026 869,1022 1041,1016 1214,1010 1328,1007 1388,1004 1429,998 1452,991 1499,984 1610,960 1722,935 1833,913 1933,894 1973,886'),'#000',7,'stroke-linecap="round"');
 /* small candles along the base range */
 for(let i=0;i<150;i++){const x=425+i*5.65;if(x>1262)break;const h=[2,3,2,5,2,3,7,2][(i*7+(i>>2))%8];const y=x<600?1007:x<735?1011:x<830?1001:x<1000?1001:999;const c=(i*5+(i>>1))%3?UP:DN;p.rect(x,y,x<600||x>900?3:2,x<600||x>830?2:h,c)}
 for(let i=0;i<12;i++)p.rect(1284+i*5.6,988-(i%5==3?3:0),2.5,5,i%3?UP:DN);
 p.rect(422,991,1594,4,'#f00');p.rect(422,995,1594,4,'#000');p.rect(422,1004,1594,3,'#000');
 p.line([[1405,735.5],[1974,735.500]],UP,1.500,'stroke-dasharray="4 2"');
 p.line(poly('1340,990 1370,975 1391,950 1397,917 1404,863 1410,827 1417,777 1424,742 1428,742 1440,757 1446,772 1457,785 1469,773 1487,740 1494,736'),'#e020c0',1.2,'stroke-dasharray="6 4"');
 p.line(poly('1350,990 1385,975 1396,963 1405,913 1415,860 1424,827 1432,797 1444,772 1451,760 1463,766 1480,767 1494,760 1506,748 1517,736'),'#1c39c0',1.2,'stroke-dasharray="6 4"');
 [[1352,973,990,970,990],[1357,974,976,972,978],[1363,968,977,964,977],[1368,968,972,967,974,1],[1374,962,972,961,973],[1379,960,962,959,966],[1385,952,962,947,963],[1390.5,910,952,910,958],[1397,859,863,835,885],[1401,762,857,762,864],[1429,736,777,736,789,1],[1435,765,775,761,789],[1440,765,790,763,799,1],[1446,781,791,776,791],[1451,781,790,777,793,1],[1457,788,791,778,793,1],[1462,772,790,768,791],[1468,736,771,736,777]].forEach(d=>{const c=d[5]?DN:UP;p.rect(d[0]-.6,d[3],1.200,d[4]-d[3],c);p.rect(d[0]-2,d[1],4,d[2]-d[1],c)});
 [[1352,1156],[1363,1156],[1385,1155],[1390,1147],[1397,1106],[1401,1087],[1407,1102,1],[1412,1154,1],[1418,1151],[1424,1152,1],[1429,1075],[1435,1139,1],[1440,1138],[1446,1150,1],[1451,1150,1],[1457,1152,1],[1462,1148],[1468,1124],[1474,1156,1],[1479,1156,1],[1485,1157,1],[740,1156],[745,1156,1],[752,1156],[1286,1156]].forEach(d=>p.rect(d[0]-1.5,d[1],3.5,1159-d[1],d[2]?DN:UP));
 p.line([[422,1157.500],[1974,1157.500]],'#888',1);
 p.line(poly('1391,1156 1398,1140 1406,1123 1410,1119 1416,1119 1424,1129 1429,1128 1435,1134 1451,1131 1458,1147 1472,1146 1489,1150 1496,1158 1578,1158'),'#e020c0',1.2);
 p.line(poly('1396,1153 1404,1148 1424,1148 1429,1143 1444,1141 1461,1141 1469,1138 1499,1138 1517,1148 1534,1148 1542,1153 1554,1155 1576,1156 1579,1158 1794,1158'),'#f0ac00',1.2);
 p.line(poly('1401,1155 1429,1152 1726,1152 1732,1154 1754,1154 1763,1157 1794,1158 1975,1158'),'#109a40',1.4);
 p.line(poly('1396,1156 1410,1154.500 1973,1154.500'),'#888',1.4);
 [738,1277].forEach(x=>p.line([[x,716],[x,1160]],'#e02828',1));
 p.line([[422,1058.500],[2105,1058.500]],'#999',1);p.line([[422,1160.500],[2105,1160.500]],'#999',1);p.line([[2017.500,716],[2017.500,1184]],'#999',1);p.line([[422,1183],[2105,1183]],'#999',2);
 for(let v=2220;v<=3040;v+=20){const y=767.500+(3000-v)*.367;p.line([[2017,y],[v%100?2020:2024,y]],'#888',1)}
 for(let y=1079;y<1158;y+=8.800)p.line([[2017,y],[2020,y]],'#888',1);
 p.text(2018,722,'LC:33,26','#e0301e');p.text(2018,738,'H','#2466d0');
 p.rect(2022,726,72,16,UP);p.text(2026,734,'3,085','#fff');p.text(2026,749,'29,89%','#e0301e');
 ['3,000','2,900','2,800','2,700','2,600','2,500','2,400','2,300'].forEach((t,i)=>p.text(2026,766+i*36.7,t));
 p.text(2026,1113,'1,000K');p.rect(2022,1128,72,16,DN);p.text(2026,1136,'211','#fff');p.text(2026,1151,'83,40%','#2466d0');xs(p,2084,1063);
 [[423,'07/13',1],[501,'13'],[601,'14'],[701,'15'],[739,'07/14',1],[829,'10'],[918,'11'],[995,'12'],[1074,'13'],[1174,'14'],[1235,'15'],[1278,'07/15',1],[1390,'10'],[1501,'11'],[1612,'12'],[1724,'13'],[1835,'14'],[1935,'15'],[2026,'15:30:00']].forEach(a=>p.text(a[0],1170,a[1],'#444',a[2]?'font-weight="700"':''));
 [499,599,699,738,827,916,993,1072,1172,1233,1277,1388,1499,1610,1722,1833,1933].forEach(x=>p.line([[x,1161],[x,1182]],'#999',1));
 icon(p,427,739);p.done();
}
daily();minute();addEventListener('resize',()=>{daily();minute()});

/* ---------- right tool column ---------- */
const Nv='#1c2f7c',z='<path d="M3 20l4-5 3 2 4-9 5 12 5-13" fill="none" stroke="#aaa" stroke-width="1.4"/>';
const T=[`<path d="M10 6h5q3 0 3 3t-3 3h-3q-3 0-3 4t3 4h7" fill="none" stroke="#2c4aa8" stroke-width="4"/><path d="M3 7l7-5v10zM25 20l-7-5v10z" fill="${Nv}"/>`,
`<path d="M4 4h7v8H4zM4 15h7v8H4zM4 12v3M18 4h6v7h-6M18 15h6v8h-6" fill="none" stroke="#999" stroke-width="2"/><path d="M10 8h5M22 20h-6" stroke="${Nv}" stroke-width="2"/><path d="M15 4l5 4-5 4zM16 16l-5 4 5 4z" fill="${Nv}"/>`,
`<circle cx="14" cy="13.500" r="6.500" fill="none" stroke="#8a5a00" stroke-width="6"/><path d="M14 3v21M3.500 13.500h21M6.500 6l15 15M21.500 6l-15 15" stroke="#8a5a00" stroke-width="4.600"/><path d="M14 4v19M4.500 13.500h19M7.200 6.700l13.600 13.600M20.800 6.700L7.200 20.300" stroke="#f5b63a" stroke-width="2.600"/><circle cx="14" cy="13.500" r="6.500" fill="#e3e1dc" stroke="#f5b63a" stroke-width="4"/><circle cx="14" cy="13.500" r="3.800" fill="#e3e1dc" stroke="#8a5a00"/>`,
`<path d="M5 4h17v15H5z" fill="#fff" stroke="#aaa"/><path d="M6 13l5-5 3 3 7-5" fill="none" stroke="#e88" stroke-width="1.500"/><text x="9" y="24" font-size="12" fill="${Nv}">f(x)</text>`,
`<path d="M5 3v19h9" fill="none" stroke="#888" stroke-width="1.500"/><path d="M7 9l5 6 7-9 5 4" fill="none" stroke="#aaa"/><path d="M7 16l5-5 3 3 7-8" fill="none" stroke="#d33" stroke-width="2"/><path d="M15.500 16.500h8v8h-8zM19.500 16.500v8M15.500 20.500h8" fill="#fff" stroke="${Nv}"/>`,
`${z}<path d="M9 4v16l4-4 4 7 2-1-3-7h5z" fill="${Nv}"/>`,
`${z}<path d="M4 9h20" stroke="${Nv}" stroke-width="2"/><path d="M2 7h3v4H2zM23 7h3v4h-3z" fill="#d33"/>`,
`${z}<path d="M4 18L24 7" stroke="${Nv}" stroke-width="2"/><path d="M2 16h3v4H2zM23 5h3v4h-3z" fill="#d33"/>`,
`<path d="M4 13l6-3 3 4 5-6 6 4" fill="none" stroke="#aaa"/><path d="M4 13L24 4" stroke="#888" stroke-width="1.500"/><path d="M2 11h3v4H2zM23 2h3v4h-3z" fill="#d33"/><text x="2" y="25" font-size="9" font-weight="700" fill="${Nv}">AUTO</text>`,
`<path d="M18 20l7-14" stroke="#aaa"/><path d="M4 17l3-2 3 2 4-10 6 13" fill="none" stroke="${Nv}" stroke-width="1.500"/><path d="M2 16h3v3H2zM9 15h3v3H9zM12 5h3v3h-3zM18 19h3v3h-3z" fill="#d33"/>`,
`<path d="M6 5v17M22 5v17" stroke="${Nv}" stroke-width="1.500"/><path d="M3.500 9h5v9h-5zM19.500 9h5v9h-5z" fill="#3a62c8" stroke="${Nv}"/><path d="M14 2v23" stroke="#d22" stroke-width="1.500"/><path d="M11.500 6h5v14h-5z" fill="#fff" stroke="#d22" stroke-width="1.500"/>`,
`${z}<path d="M7 13V5h14v5" fill="none" stroke="#2c4aa8" stroke-width="3"/><path d="M3 11h9l-4.500 6zM17 8h9l-4.500 6z" fill="${Nv}"/>`,
`${z}<text x="4" y="14" font-size="15" font-weight="700" fill="${Nv}" style="font-family:'Liberation Serif'">T</text>`,
`<path d="M18 21l7-8" stroke="#aaa"/><path d="M7 18V8h7" fill="none" stroke="${Nv}" stroke-width="1.500"/><path d="M14.500 3.500h10v12h-10z" fill="#fff" stroke="${Nv}"/><text x="16" y="14" font-size="13" font-weight="700">1</text><path d="M5 17h4v3H5z" fill="#d33"/>`,
`${z}<path d="M11 12l7-8q4-2 6 2l-7 9q-5 2-6-3z" fill="#fffdf2" stroke="#333" stroke-width="1.200"/>`,
`<path d="M18 20l6-8" stroke="#aaa"/><path d="M11 11l7-8q4-2 6 2l-7 9q-5 2-6-3z" fill="#fffdf2" stroke="#333" stroke-width="1.200"/><text x="3" y="25" font-size="10" font-weight="700" fill="${Nv}">ALL</text>`,
`<path d="M4 5h20v17H4zM4 9h20M4 13h20M4 17h20M9 5v17" fill="#eee" stroke="#999"/><text x="13" y="20" font-size="15" font-weight="700" fill="${Nv}" style="font-family:'Liberation Serif'">T</text>`,
`<path d="M4 20l5-6 3 2 3-6 4 6" fill="none" stroke="#aaa"/><path d="M3 6h16" stroke="#d33" stroke-width="2"/><path d="M3 13h16" stroke="#222" stroke-width="2"/><path d="M3 20h16" stroke="#2b78c8" stroke-width="2"/><path d="M19 1h8v25h-8z" fill="#f4f4f4"/><text font-size="9" font-weight="700"><tspan x="20" y="9">H</tspan><tspan x="20" y="17">C</tspan><tspan x="20" y="25">L</tspan></text>`,
`${z}<path d="M2 19L15 7l6 0" fill="none" stroke="${Nv}" stroke-width="1.600"/><path d="M17 7l7-4v9z" fill="#e8c877" stroke="#555" stroke-width=".6"/><path d="M21 3h4v9h-4z" fill="${Nv}"/>`,
`<circle cx="14" cy="13" r="8" fill="#7fb8ea" stroke="#3f87cc"/><path d="M3 20l4-5 3 2 4-9 5 12 5-13" fill="none" stroke="#789" stroke-width="1.200"/>`];
$('#tools').innerHTML=T.map((s,i)=>`<button aria-label="도구 ${i+1}"><svg viewBox="0 0 28 27">${s}</svg></button>`).join('');
</script>
</body>
</html>
